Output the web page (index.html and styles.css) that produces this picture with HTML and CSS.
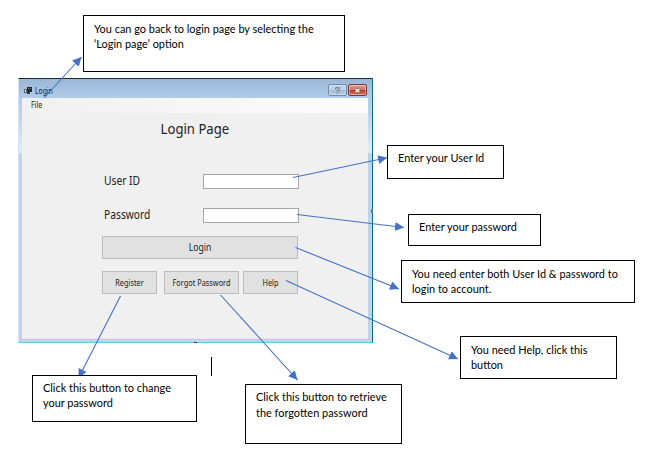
FILE: index.html
```html
<!DOCTYPE html>
<html lang="en">
<head>
<meta charset="utf-8">
<title>Login Page guide</title>
<link rel="stylesheet" href="styles.css">
</head>
<body>
<main class="canvas">
  <section class="window">
    <header class="titlebar">
      <svg class="app-icon" viewBox="0 0 8 8"><path d="M3 0h5v5H3z" fill="#252b35"/><path d="M4 1h1v1H4zM6 1h1v1H6z" fill="#76808c"/><path d="M0 2h3v4H0z" fill="#59616c"/><path d="M1 3h1v2H1z" fill="#eef3f8"/><path d="M3 5h3v2H3z" fill="#343a43"/></svg>
      <span class="caption">Login</span>
      <span class="control help-control"><svg viewBox="0 0 8 8"><path d="M2 2.5Q2 1 4 1t2 1.5Q6 3.5 4 4.3V5M4 6v1.400" fill="none" stroke="#62748c" stroke-width="2.200"/><path d="M2.200 2.400Q2.300 1.200 4 1.200t1.800 1.300Q5.800 3.500 4 4.300V5M4 6.200v1" fill="none" stroke="#e5edf6" stroke-width=".8"/></svg></span>
      <span class="control close-control"><svg viewBox="0 0 8 8"><path d="M1.500 1.800l5 4.400M6.500 1.800l-5 4.400" stroke="#74504f" stroke-width="3"/><path d="M1.700 2l4.600 4M6.300 2L1.700 6" stroke="#fff" stroke-width="1.600"/></svg></span>
    </header>
    <div class="client">
      <nav class="menu"><span>File</span></nav>
      <h1><span>Login Page</span></h1>
      <div class="form">
        <label class="field"><span>User ID</span><input type="text"></label>
        <label class="field"><span>Password</span><input type="text"></label>
        <button class="login"><span>Login</span></button>
        <div class="actions">
          <button class="register"><span>Register</span></button>
          <button class="forgot"><span>Forgot Password</span></button>
          <button class="help"><span>Help</span></button>
        </div>
      </div>
    </div>
  </section>
  <i class="handle side"></i><i class="handle bottom"></i><i class="caret"></i>

  <svg class="arrows" viewBox="0 0 649 460">
    <defs><marker id="head" markerUnits="userSpaceOnUse" markerWidth="10" markerHeight="10" refX="9" refY="4.500" orient="auto"><path d="M0 0L9 4.500L0 9z" fill="#4472c4"/></marker></defs>
    <g stroke="#4472c4" stroke-width="1.100" marker-end="url(#head)">
      <path d="M44 98L81.500 57"/>
      <path d="M293 177.500L387 157.700"/>
      <path d="M297 214.500L404 227.500"/>
      <path d="M295.500 247.500L399 289"/>
      <path d="M286 280.500L458 359"/>
      <path d="M120.500 296L78.500 378"/>
      <path d="M220.500 295L297.500 380"/>
    </g>
  </svg>

  <p class="note note-menu"><span>You can go back to login page by selecting the</span><span>‘Login page’ option</span></p>
  <p class="note note-user"><span>Enter your User Id</span></p>
  <p class="note note-pass"><span>Enter your password</span></p>
  <p class="note note-login"><span>You need enter both User Id &amp; password to</span><span>login to account.</span></p>
  <p class="note note-help"><span>You need Help, click this</span><span>button</span></p>
  <p class="note note-register"><span>Click this button to change</span><span>your password</span></p>
  <p class="note note-forgot"><span>Click this button to retrieve</span><span>the forgotten password</span></p>
</main>
</body>
</html>
```
FILE: styles.css
```css
* { box-sizing: border-box; }
body { margin: 0; background: #fff; }
.canvas { position: relative; width: 649px; height: 460px; overflow: hidden; }

.window {
  position: absolute; left: 18px; top: 78px; width: 355px; height: 265px;
  border-top: 1px solid #202a35; border-right: 1px solid #087083;
  border-bottom: 1px solid #56d0ec; border-left: 1px solid #d3e3f3;
  padding: 0 4px 3px 3px;
  background: linear-gradient(#9bb7d5 0, #b2cce9 20px, #bdd2ea 35px, #e0ecf8 73px, #bdd3ea 75px, #bdd3ea 100%);
  font-family: "Noto Sans", "Open Sans", sans-serif; color: #222;
}
.titlebar { display: flex; height: 19px; padding: 5px 1px 0 2px; align-items: flex-start; }
.app-icon { width: 8px; height: 8px; margin-top: 3px; flex: none; }
.caption { margin: 1px auto 0 3px; font-size: 8.500px; line-height: 12px; transform: scaleX(.8); transform-origin: left; }
.control { width: 19px; height: 12px; margin-left: 1px; border: 1px solid #7289a7; border-radius: 2px; display: flex; align-items: center; justify-content: center; box-shadow: inset 0 0 0 1px #ffffff55; }
.control svg { width: 7px; height: 7px; }
.help-control { background: linear-gradient(#bfd1e6 45%, #9eb7d2 50%, #b8cee5); }
.close-control { border-color: #713e46; background: linear-gradient(#e2a394 0, #cf7764 45%, #b93b25 50%, #d4785e); }

.client { height: 241px; background: #f0f0f0; border-bottom: 1px solid #dfe5ec; }
.menu { height: 15px; padding-left: 9px; background: linear-gradient(90deg, #f0f0f0, #fcfcfc); font-size: 8.500px; line-height: 14px; }
.menu span { display: inline-block; transform: scaleX(.82); transform-origin: left; }
h1 { margin: 5px 0 0; font-weight: 400; font-size: 14.500px; line-height: 20px; text-align: center; }
h1 span { display: inline-block; transform: scaleX(.905); }
.form { width: 196px; margin: 36px 0 0 80px; }
.field { display: flex; width: 197px; height: 15px; justify-content: space-between; align-items: center; margin-bottom: 19px; padding-left: 2px; font-size: 11.800px; line-height: 15px; }
.field span { margin-top: -3px; transform: scaleX(.87); transform-origin: left; }
.field input { width: 96px; height: 15px; margin: 0; border: 1px solid #a6a6a6; background: #fff; }
button { margin: 0; padding: 0; border: 1px solid #bcbcbc; background: #e1e1e1; color: #222; font-family: inherit; white-space: nowrap; }
button span { display: block; margin: 0 -8px; transform: scaleX(.865); }
.login { display: block; width: 196px; height: 23px; margin-top: -6px; padding-bottom: 2px; font-size: 10px; }
.actions { display: flex; height: 23px; margin-top: 12px; justify-content: space-between; }
.actions button { font-size: 8.500px; }
.register { width: 55px; }
.forgot { width: 75px; margin-left: 3px; }
.help { width: 55px; }

.handle { position: absolute; background: #70767a; }
.side { left: 371px; top: 209px; width: 2px; height: 4px; }
.bottom { left: 194px; top: 342px; width: 3px; height: 1px; background: #333; }
.caret { position: absolute; left: 211px; top: 357px; width: 1px; height: 19px; background: #000; }
.arrows { position: absolute; inset: 0; width: 649px; height: 460px; }

.note { position: absolute; margin: 0; padding: 5px 0 0 10px; border: 1px solid #000; background: #fff; color: #000; font: 12.300px/15px Lato, "Open Sans", sans-serif; }
.note span { display: table; white-space: nowrap; transform: scaleX(.888); transform-origin: left; }
.note-menu { left: 83px; top: 15px; width: 262px; height: 57px; }
.note-user { left: 387px; top: 145px; width: 117px; height: 34px; padding-top: 4px; }
.note-pass { left: 408px; top: 214px; width: 133px; height: 32px; padding-top: 4px; }
.note-login { left: 401px; top: 260px; width: 234px; height: 43px; }
.note-help { left: 460px; top: 336px; width: 157px; height: 43px; }
.note-register { left: 32px; top: 375px; width: 165px; height: 47px; padding-top: 4px; }
.note-forgot { left: 245px; top: 384px; width: 157px; height: 60px; line-height: 16px; padding-top: 4px; }
```
